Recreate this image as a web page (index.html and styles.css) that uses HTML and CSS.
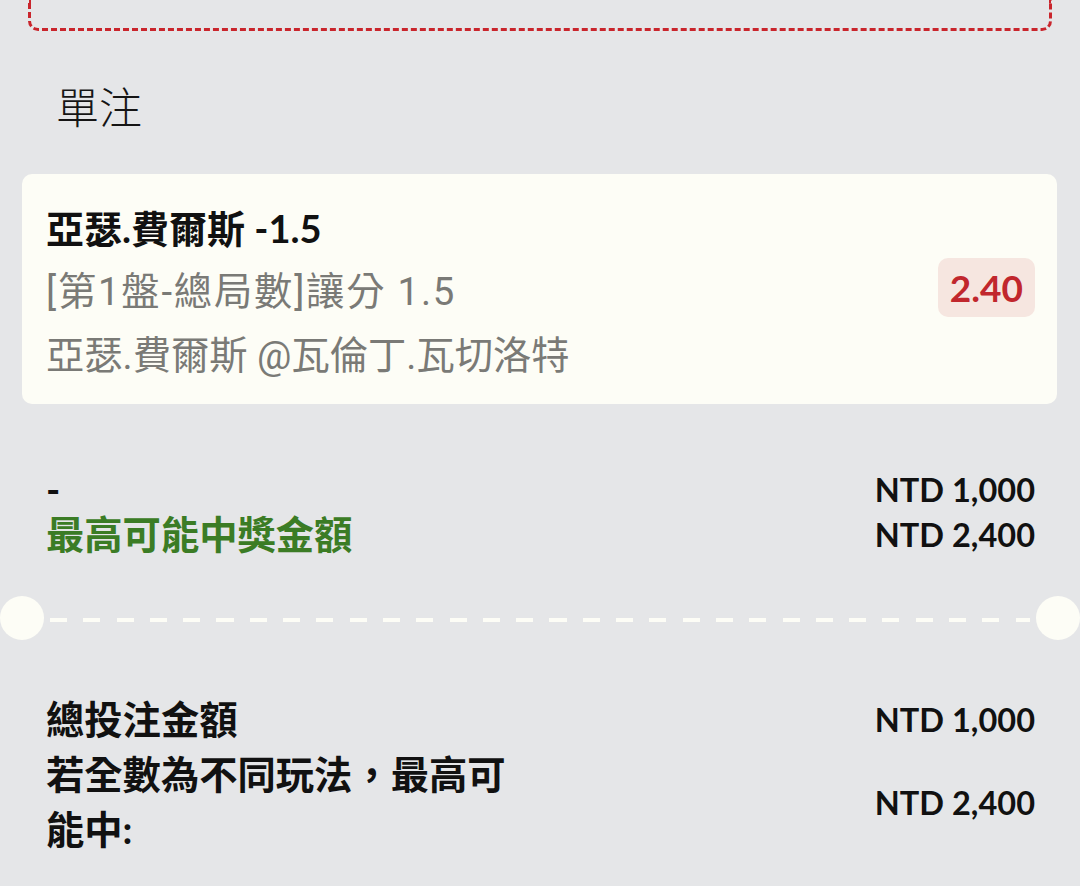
FILE: index.html
```html
<!DOCTYPE html>
<html lang="zh-Hant">
<head>
<meta charset="utf-8">
<title>單注</title>
<link rel="stylesheet" href="styles.css">
</head>
<body>
<div class="page">
  <div class="promo-box"></div>

  <h2 class="section-title">單注</h2>

  <div class="bet-card">
    <div class="bet-info">
      <div class="bet-name">亞瑟.費爾斯 -1.5</div>
      <div class="bet-line bet-market">[第1盤-總局數]讓分 1.5</div>
      <div class="bet-line">亞瑟.費爾斯 @瓦倫丁.瓦切洛特</div>
    </div>
    <div class="odds">2.40</div>
  </div>

  <div class="stake">
    <div class="row">
      <span class="label">-</span>
      <span class="amount">NTD 1,000</span>
    </div>
    <div class="row">
      <span class="label label-green">最高可能中獎金額</span>
      <span class="amount">NTD 2,400</span>
    </div>
  </div>

  <div class="divider">
    <span class="notch"></span>
    <span class="dash-line"></span>
    <span class="notch"></span>
  </div>

  <div class="summary">
    <div class="sum-row">
      <span class="sum-label">總投注金額</span>
      <span class="amount">NTD 1,000</span>
    </div>
    <div class="sum-row">
      <span class="sum-label">若全數為不同玩法，最高可能中:</span>
      <span class="amount">NTD 2,400</span>
    </div>
  </div>
</div>
</body>
</html>
```
FILE: styles.css
```css
html, body {
  margin: 0;
  padding: 0;
}

body {
  background: #e5e6e8;
  font-family: "Lato", "Noto Sans CJK TC", sans-serif;
  color: #111;
  width: 1080px;
  height: 886px;
  overflow: hidden;
}

.page {
  display: flex;
  flex-direction: column;
}

.promo-box {
  margin: 0 28px;
  height: 28px;
  border: 3px dashed #c9252c;
  border-top: none;
  border-radius: 0 0 10px 10px;
}

.section-title {
  margin: 46px 0 41px 56px;
  font-family: "Noto Sans CJK TC", sans-serif;
  font-weight: 300;
  font-size: 43px;
  line-height: 56px;
  color: #151515;
}

.bet-card {
  margin: 0 23px 0 22px;
  background: #fdfdf6;
  border-radius: 10px;
  padding: 22px 22px 16px 24px;
  display: flex;
  align-items: center;
  justify-content: space-between;
}

.bet-info {
  display: flex;
  flex-direction: column;
}

.bet-name {
  font-weight: 700;
  font-size: 38px;
  line-height: 64px;
  color: #111;
}

.bet-line {
  font-family: "Roboto", "Noto Sans CJK TC", sans-serif;
  font-size: 38.3px;
  line-height: 64px;
  color: #7a7a76;
}

.bet-market {
  letter-spacing: 1.8px;
}

.odds {
  margin-bottom: 10px;
  background: #f6e6e0;
  color: #c1272d;
  border-radius: 10px;
  padding: 0 12px;
  height: 59px;
  line-height: 59px;
  font-size: 37px;
  font-weight: 700;
}

.stake {
  margin: 63px 45px 0 46px;
  display: flex;
  flex-direction: column;
}

.row {
  display: flex;
  justify-content: space-between;
  align-items: center;
  height: 45px;
}

.label {
  font-weight: 700;
  font-size: 38.3px;
  line-height: 45px;
}

.label-green {
  color: #3b7c25;
}

.amount {
  font-weight: 700;
  font-size: 32.5px;
  line-height: 45px;
  color: #111;
}

.divider {
  margin-top: 39px;
  display: flex;
  align-items: center;
  height: 44px;
}

.notch {
  width: 44px;
  height: 44px;
  border-radius: 50%;
  background: #fdfdf6;
  flex: none;
}

.dash-line {
  flex: 1;
  height: 4px;
  margin: 4px 6px 0;
  background: repeating-linear-gradient(to right, #fdfdf6 0 17px, transparent 17px 33.3px);
}

.summary {
  margin: 52px 45px 0 46px;
  display: flex;
  flex-direction: column;
}

.sum-row {
  display: flex;
  justify-content: space-between;
  align-items: center;
}

.sum-label {
  max-width: 480px;
  font-weight: 700;
  font-size: 38.3px;
  line-height: 55px;
}
```
